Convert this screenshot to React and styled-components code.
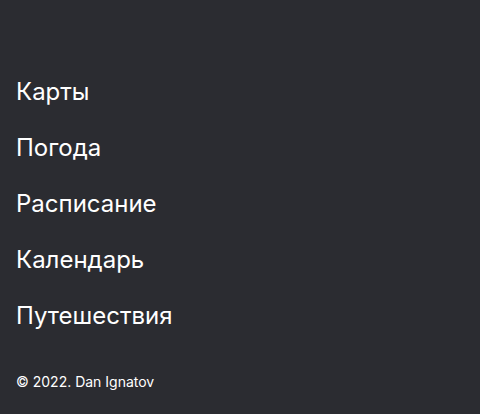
import React from 'react';
import styled, { createGlobalStyle } from 'styled-components';

const GlobalStyle = createGlobalStyle`
  html, body {
    margin: 0;
    padding: 0;
    background: #2b2c31;
  }
  body {
    font-family: Inter, "Noto Sans", sans-serif;
    color: #ffffff;
  }
`;

const Page = styled.div`
  width: 480px;
  height: 414px;
  box-sizing: border-box;
  background: #2b2c31;
  display: flex;
  flex-direction: column;
  padding: 64px 16px 0;
`;

const Nav = styled.nav`
  display: flex;
  flex-direction: column;
`;

const NavLink = styled.a`
  font-size: 24px;
  line-height: 56px;
  color: #ffffff;
  text-decoration: none;
`;

const Footer = styled.footer`
  margin-top: 28px;
  font-size: 14px;
  line-height: 20px;
  color: #ffffff;
`;

const links = ['Карты', 'Погода', 'Расписание', 'Календарь', 'Путешествия'];

const App = () => (
  <>
    <GlobalStyle />
    <Page>
      <Nav>
        {links.map((l) => (
          <NavLink key={l} href="#">
            {l}
          </NavLink>
        ))}
      </Nav>
      <Footer>© 2022. Dan Ignatov</Footer>
    </Page>
  </>
);

export default App;
